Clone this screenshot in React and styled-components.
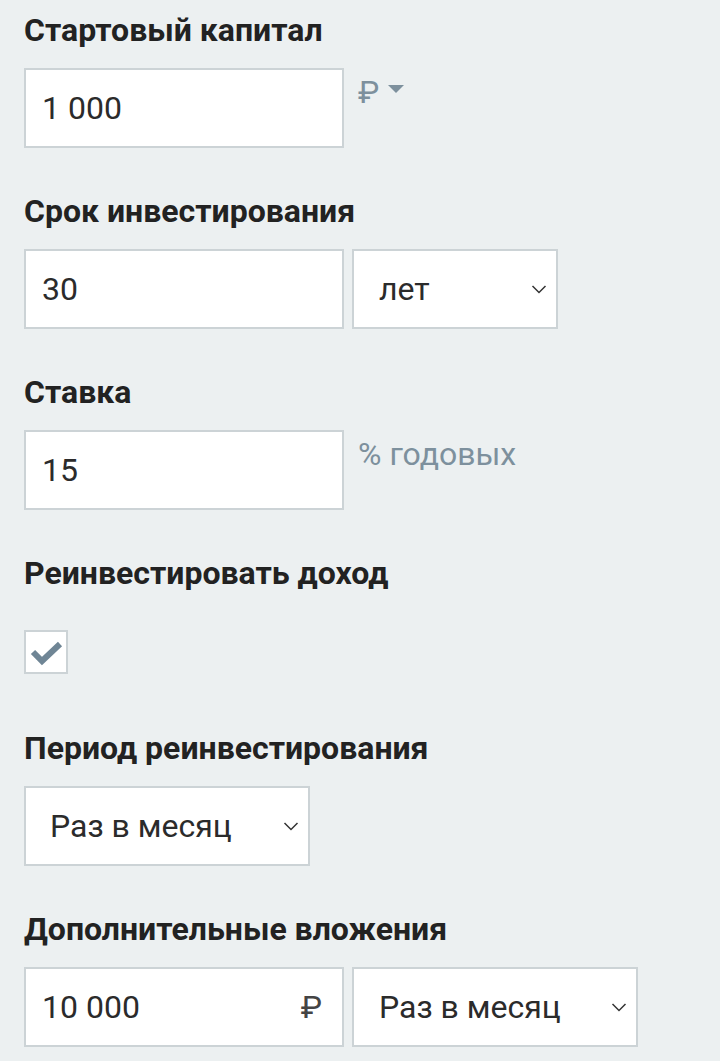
import React, { useState } from "react";
import styled, { createGlobalStyle } from "styled-components";

const Global = createGlobalStyle`
  html, body { margin: 0; padding: 0; background: #ecf0f1; }
  body { font-family: Roboto, "Noto Sans", "Liberation Sans", sans-serif; color: #222; }
  * { box-sizing: border-box; }
`;

const Page = styled.div`
  padding: 14px 24px 0;
  display: flex;
  flex-direction: column;
`;

const Field = styled.div`
  display: flex;
  flex-direction: column;
  margin-bottom: ${(p) => p.$mb ?? 47}px;
`;

const Label = styled.div`
  font-size: 32px;
  font-weight: 700;
  line-height: 32px;
  color: #222;
  margin-bottom: ${(p) => p.$mb ?? 22}px;
`;

const Row = styled.div`
  display: flex;
  align-items: flex-start;
  gap: 8px;
`;

const InputBox = styled.div`
  position: relative;
  width: ${(p) => p.$w}px;
  height: 80px;
  background: #fff;
  border: 2px solid #ccd3d6;
  display: flex;
  align-items: center;
`;

const TextInput = styled.input`
  border: none;
  outline: none;
  background: transparent;
  width: 100%;
  height: 100%;
  padding: 0 16px;
  font-family: inherit;
  font-size: 32px;
  color: #2b2b2b;
`;

const InnerSuffix = styled.span`
  position: absolute;
  right: 20px;
  top: 50%;
  transform: translateY(-50%);
  font-size: 32px;
  color: #444;
`;

const SelectBox = styled.div`
  position: relative;
  width: ${(p) => p.$w}px;
  height: 80px;
  background: #fff;
  border: 2px solid #ccd3d6;
`;

const NativeSelect = styled.select`
  appearance: none;
  -webkit-appearance: none;
  border: none;
  outline: none;
  background: transparent;
  width: 100%;
  height: 100%;
  padding: 0 40px 0 ${(p) => p.$pl ?? 25}px;
  font-family: inherit;
  font-size: 32px;
  color: #2b2b2b;
`;

const Chevron = styled.svg`
  position: absolute;
  right: 8px;
  top: 50%;
  transform: translateY(-50%);
  pointer-events: none;
`;

const Suffix = styled.div`
  display: flex;
  align-items: center;
  gap: 9px;
  margin-left: 6px;
  margin-top: 8px;
  font-size: 32px;
  line-height: 32px;
  color: #7d909d;
`;

const Caret = styled.span`
  width: 0;
  height: 0;
  border-left: 8px solid transparent;
  border-right: 8px solid transparent;
  border-top: 8px solid #7d909d;
  margin-top: -6px;
`;

const CheckBox = styled.button`
  width: 44px;
  height: 44px;
  padding: 0;
  background: #fff;
  border: 2px solid #ccd3d6;
  display: flex;
  align-items: center;
  justify-content: center;
  cursor: pointer;
`;

function Select({ w, value, options, pl }) {
  const [v, setV] = useState(value);
  return (
    <SelectBox $w={w}>
      <NativeSelect value={v} $pl={pl} onChange={(e) => setV(e.target.value)}>
        {options.map((o) => (
          <option key={o}>{o}</option>
        ))}
      </NativeSelect>
      <Chevron width="18" height="12" viewBox="0 0 18 12">
        <polyline points="2.5,3 9,9.5 15.5,3" fill="none" stroke="#333" strokeWidth="1.5" />
      </Chevron>
    </SelectBox>
  );
}

function Input({ w, value, suffix }) {
  const [v, setV] = useState(value);
  return (
    <InputBox $w={w}>
      <TextInput value={v} onChange={(e) => setV(e.target.value)} />
      {suffix && <InnerSuffix>{suffix}</InnerSuffix>}
    </InputBox>
  );
}

export default function App() {
  const [checked, setChecked] = useState(true);
  const periods = ["Раз в месяц", "Раз в квартал", "Раз в год"];
  return (
    <Page>
      <Global />
      <Field>
        <Label>Стартовый капитал</Label>
        <Row>
          <Input w={320} value="1 000" />
          <Suffix>
            <span>₽</span>
            <Caret />
          </Suffix>
        </Row>
      </Field>
      <Field>
        <Label>Срок инвестирования</Label>
        <Row>
          <Input w={320} value="30" />
          <Select w={206} value="лет" options={["лет", "месяцев"]} pl={25} />
        </Row>
      </Field>
      <Field>
        <Label>Ставка</Label>
        <Row>
          <Input w={320} value="15" />
          <Suffix>% годовых</Suffix>
        </Row>
      </Field>
      <Field $mb={58}>
        <Label $mb={41}>Реинвестировать доход</Label>
        <Row>
          <CheckBox onClick={() => setChecked(!checked)} aria-pressed={checked}>
            {checked && (
              <svg width="40" height="40" viewBox="0 0 40 40">
                <polyline points="7,20 16,29 34,12" fill="none" stroke="#6f8595" strokeWidth="6" />
              </svg>
            )}
          </CheckBox>
        </Row>
      </Field>
      <Field>
        <Label>Период реинвестирования</Label>
        <Row>
          <Select w={286} value="Раз в месяц" options={periods} pl={24} />
        </Row>
      </Field>
      <Field $mb={0}>
        <Label>Дополнительные вложения</Label>
        <Row>
          <Input w={320} value="10 000" suffix="₽" />
          <Select w={286} value="Раз в месяц" options={periods} pl={25} />
        </Row>
      </Field>
    </Page>
  );
}
